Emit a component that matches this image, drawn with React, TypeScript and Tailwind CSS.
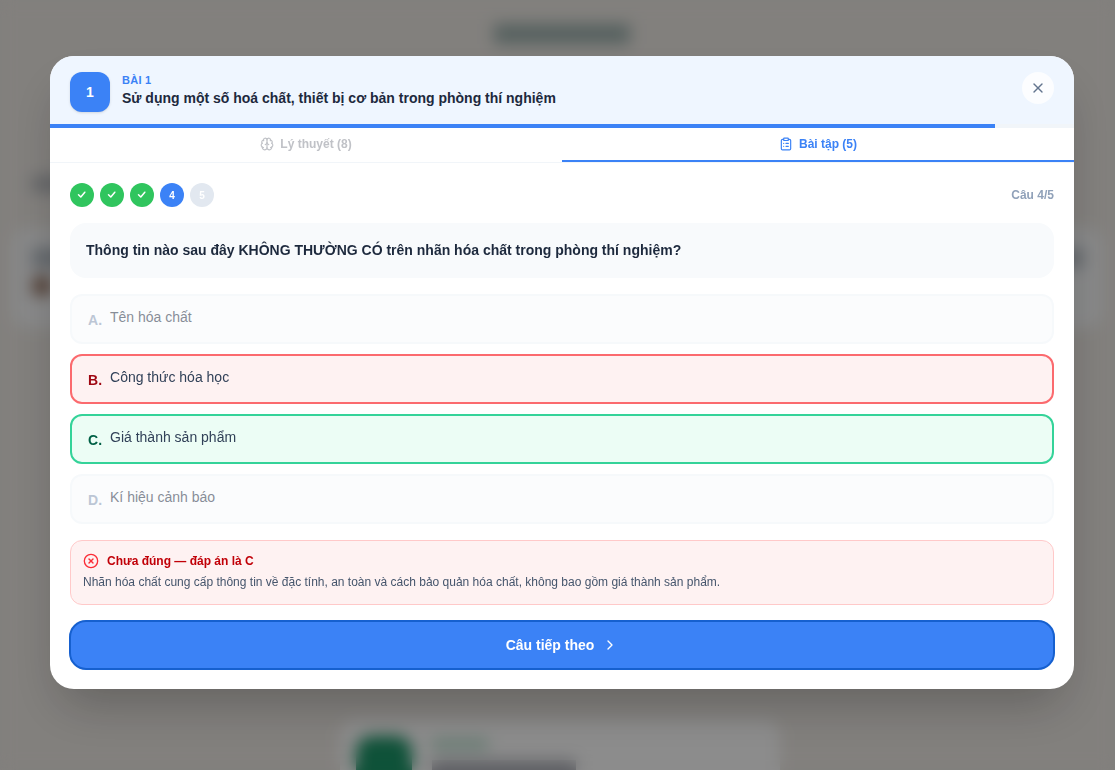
import * as React from "react"
import {
  Brain,
  ChevronRight,
  CircleX,
  ClipboardList,
  X,
} from "lucide-react"
import { clsx } from "clsx"

type OptionState = "idle" | "wrong" | "correct"

type Option = {
  letter: string
  text: string
  state: OptionState
}

const TOTAL_STEPS = 13
const DONE_STEPS = 12
const QUESTION_COUNT = 5
const CURRENT_QUESTION = 4

const OPTIONS: Option[] = [
  { letter: "A", text: "Tên hóa chất", state: "idle" },
  { letter: "B", text: "Công thức hóa học", state: "wrong" },
  { letter: "C", text: "Giá thành sản phẩm", state: "correct" },
  { letter: "D", text: "Kí hiệu cảnh báo", state: "idle" },
]

const optionStyles: Record<OptionState, string> = {
  idle: "border-slate-100 bg-slate-50 opacity-60",
  wrong: "border-[#fb6a6e] bg-red-50",
  correct: "border-[#34d399] bg-[#ecfdf5]",
}

const letterStyles: Record<OptionState, string> = {
  idle: "text-slate-400",
  wrong: "text-red-800",
  correct: "text-emerald-800",
}

const CheckIcon = ({ className }: { className?: string }) => (
  <svg
    aria-hidden="true"
    viewBox="0 0 10 10"
    className={clsx("block", className)}
    fill="none"
  >
    <path
      d="M1.5 4.7L3.8 7L7.8 2.2"
      stroke="currentColor"
      strokeWidth="1.5"
      strokeLinecap="round"
      strokeLinejoin="round"
    />
  </svg>
)

// Course page that stays visible, blurred, behind the dialog
function PageBehind() {
  return (
    <div
      aria-hidden="true"
      className="absolute inset-0 flex flex-col items-center overflow-hidden bg-[#ede9e4]"
    >
      <div className="mt-6 ml-2 h-5 w-34 shrink-0 bg-[#9cb0ad]" />
      <div className="mt-33 ml-8 h-4 w-40 shrink-0 self-start bg-[#b4b7bc]" />
      <div className="mt-9 flex h-25 w-full shrink-0 px-3">
        <div className="flex flex-1 justify-between rounded-2xl bg-[#f8f9fa] px-5 py-5">
          <div className="flex flex-col gap-2">
            <div className="h-5 w-16 bg-[#b4bcc4]" />
            <div className="h-5 w-5 rounded-full bg-[#8b6450]" />
          </div>
          <div className="h-5 w-10 bg-[#b4bcc4]" />
        </div>
      </div>
      <div className="mt-98 ml-1 flex h-30 w-110 shrink-0 gap-5 rounded-2xl bg-white p-4">
        <div className="h-14 w-14 rounded-2xl bg-[#1c9568]" />
        <div className="flex flex-col gap-3">
          <div className="mt-1 h-2 w-14 bg-[#a4d8c0]" />
          <div className="h-4 w-36 bg-[#aeb0b8]" />
        </div>
      </div>
    </div>
  )
}

function StepDot({ step }: { step: number }) {
  const done = step < CURRENT_QUESTION
  return (
    <li
      className={clsx(
        "flex h-6 w-6 items-center justify-center rounded-full text-[10px] font-bold text-white",
        done && "bg-[#30c55e]",
        step === CURRENT_QUESTION && "bg-[#3b82f6]",
        step > CURRENT_QUESTION && "bg-slate-200",
      )}
    >
      {done ? <CheckIcon className="h-2.5 w-2.5" /> : step}
    </li>
  )
}

function AnswerOption({ option }: { option: Option }) {
  return (
    <button
      type="button"
      className={clsx(
        "flex h-[50px] w-full items-start gap-2 rounded-xl border-2 px-4 py-[11px] text-left text-sm",
        optionStyles[option.state],
      )}
    >
      <span
        className={clsx(
          "mt-[3px] leading-5 font-bold",
          letterStyles[option.state],
        )}
      >
        {option.letter}.
      </span>
      <span
        className={clsx(
          "leading-5",
          option.state === "idle" ? "text-gray-700" : "text-slate-700",
        )}
      >
        {option.text}
      </span>
    </button>
  )
}

export default function App() {
  return (
    <div className="relative min-h-screen font-['Liberation_Sans',Arial,sans-serif]">
      <PageBehind />
      <div className="relative min-h-screen bg-black/45 pt-14 pr-[41px] pb-20 pl-[50px] backdrop-blur-sm">
        <div
          role="dialog"
          aria-labelledby="lesson-title"
          className="overflow-hidden rounded-3xl bg-white shadow-2xl"
        >
          <header className="flex items-start gap-3 bg-[#eff6ff] px-5 pt-4 pb-3">
            <div className="flex h-10 w-10 items-center justify-center rounded-xl bg-[#3b82f6] text-sm font-bold text-white shadow-sm">
              1
            </div>
            <div className="flex-1">
              <p className="text-[11px] leading-4 font-bold tracking-wide text-[#3b82f6]">
                BÀI 1
              </p>
              <h2
                id="lesson-title"
                className="text-sm leading-5 font-bold text-slate-800"
              >
                Sử dụng một số hoá chất, thiết bị cơ bản trong phòng thí nghiệm
              </h2>
            </div>
            <button
              type="button"
              aria-label="Đóng"
              className="flex h-8 w-8 items-center justify-center rounded-full bg-white/80 text-slate-500"
            >
              <X size={16} />
            </button>
          </header>
          <div className="h-1 bg-slate-100">
            <div
              className="h-full bg-[#3b82f6]"
              style={{ width: `${(DONE_STEPS / TOTAL_STEPS) * 100}%` }}
            />
          </div>

          <div
            role="tablist"
            className="flex border-b border-slate-100 text-xs font-semibold"
          >
            <button
              type="button"
              role="tab"
              aria-selected="false"
              className="flex h-[34px] flex-1 items-center justify-center gap-1.5 border-b-2 border-transparent text-[#c0c2c7]"
            >
              <Brain size={14} />
              Lý thuyết (8)
            </button>
            <button
              type="button"
              role="tab"
              aria-selected="true"
              className="flex h-[34px] flex-1 items-center justify-center gap-1.5 border-b-2 border-[#3b82f6] text-[#3b82f6]"
            >
              <ClipboardList size={14} />
              Bài tập (5)
            </button>
          </div>

          <div className="flex flex-col gap-4 p-5">
            <div className="flex items-center justify-between">
              <ol className="flex gap-1.5">
                {Array.from({ length: QUESTION_COUNT }, (_, i) => (
                  <StepDot key={i} step={i + 1} />
                ))}
              </ol>
              <span className="text-xs font-semibold text-slate-400">
                Câu {CURRENT_QUESTION}/{QUESTION_COUNT}
              </span>
            </div>

            <p className="rounded-2xl bg-[#f8fafc] p-4 text-sm leading-[23px] font-semibold text-slate-800">
              Thông tin nào sau đây KHÔNG THƯỜNG CÓ trên nhãn hóa chất trong
              phòng thí nghiệm?
            </p>

            <div className="flex flex-col gap-2.5">
              {OPTIONS.map((option) => (
                <AnswerOption key={option.letter} option={option} />
              ))}
            </div>

            <div className="rounded-xl border border-red-200 bg-red-50 p-3">
              <div className="flex items-center gap-2 text-xs leading-4 font-bold text-red-700">
                <CircleX size={16} className="text-red-500" />
                Chưa đúng — đáp án là C
              </div>
              <p className="mt-1 text-xs leading-[19px] text-slate-600">
                Nhãn hóa chất cung cấp thông tin về đặc tính, an toàn và cách
                bảo quản hóa chất, không bao gồm giá thành sản phẩm.
              </p>
            </div>

            <button
              type="button"
              className="flex h-12 items-center justify-center gap-2 rounded-2xl bg-[#3b82f6] text-sm font-semibold text-white outline-2 -outline-offset-1 outline-[#1660cf]"
            >
              Câu tiếp theo
              <ChevronRight size={16} />
            </button>
          </div>
        </div>
      </div>
    </div>
  )
}
